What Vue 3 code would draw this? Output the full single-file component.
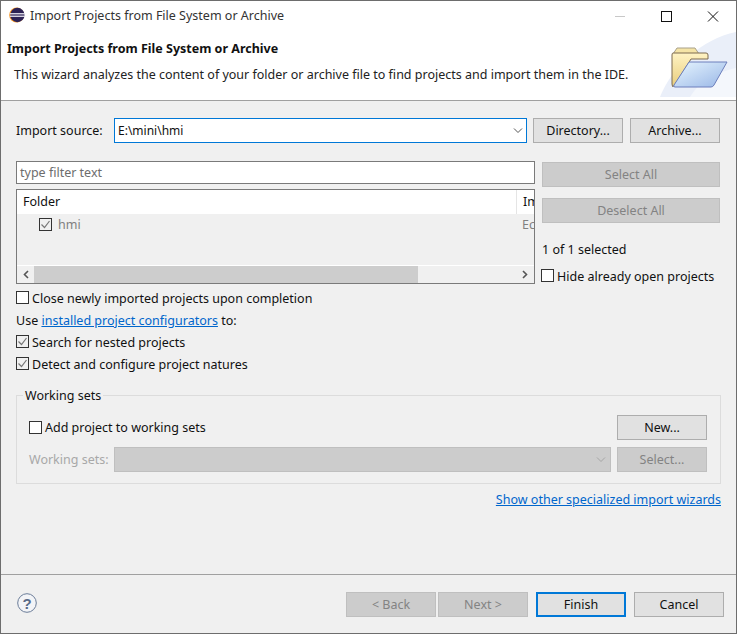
<template>
  <div class="window">
    <!-- title bar -->
    <div class="titlebar">
      <svg class="app-icon" width="16" height="16" viewBox="0 0 16 16">
        <circle cx="7.6" cy="8" r="7.4" fill="#f7941e" />
        <circle cx="8.4" cy="8" r="7.2" fill="#2c2255" />
        <rect x="1" y="6.1" width="15" height="1.3" fill="#e8e6f0" />
        <rect x="1" y="8.6" width="15" height="1.3" fill="#e8e6f0" />
      </svg>
      <span class="title-text">Import Projects from File System or Archive</span>
      <div class="win-controls">
        <svg width="46" height="30" viewBox="0 0 46 30"><rect x="17" y="15" width="10" height="1" fill="#c8c8c8" /></svg>
        <svg width="46" height="30" viewBox="0 0 46 30"><rect x="17.5" y="10.5" width="10" height="10" fill="none" stroke="#111" /></svg>
        <svg width="46" height="30" viewBox="0 0 46 30"><path d="M18 10.5l10 10M28 10.5l-10 10" stroke="#111" fill="none" /></svg>
      </div>
    </div>

    <!-- wizard header -->
    <div class="wiz-header">
      <div class="wiz-text">
        <h1>Import Projects from File System or Archive</h1>
        <p>This wizard analyzes the content of your folder or archive file to find projects and import them in the IDE.</p>
      </div>
      <svg class="wiz-image" width="76" height="70" viewBox="0 0 76 70">
        <defs>
          <linearGradient id="back" x1="0" y1="0" x2="0" y2="1">
            <stop offset="0" stop-color="#fff3c4" />
            <stop offset="1" stop-color="#e8cd7c" />
          </linearGradient>
          <linearGradient id="front" x1="0" y1="0" x2="1" y2="1">
            <stop offset="0" stop-color="#e8f6ff" />
            <stop offset="1" stop-color="#98b6e6" />
          </linearGradient>
        </defs>
        <path d="M0 67C10 40 42 8 76 2V67Z" fill="#eaeff9" />
        <path d="M30 67C40 50 58 42 76 38V67Z" fill="#f4f7fc" />
        <path d="M13 24l4-6h18l4 6z" fill="#f5e4a6" stroke="#a8a08a" />
        <path d="M13 23h33q2 0 2 2v4H31L14 56q-2 2-2-2V25q0-2 1-2z" fill="url(#back)" stroke="#7d6a50" />
        <path d="M29 32h38L54 55q-1 2-3 2H15q-2 0-1-2z" fill="url(#front)" stroke="#6d7fbc" />
      </svg>
    </div>

    <div class="wiz-body">
      <div class="source-row">
        <label class="source-label">Import source:</label>
        <div class="combo focused">
          <span>E:\mini\hmi</span>
          <svg width="10" height="6" viewBox="0 0 10 6"><path d="M1 .5l4 4 4-4" stroke="#555" fill="none" /></svg>
        </div>
        <button class="btn">Directory...</button>
        <button class="btn">Archive...</button>
      </div>

      <div class="projects">
        <div class="projects-left">
          <div class="filter">type filter text</div>
          <div class="tree">
            <div class="tree-head">
              <div class="col-folder">Folder</div>
              <div class="col-import">Im</div>
            </div>
            <div class="tree-body">
              <div class="tree-row">
                <span class="check checked tree-check">
                  <svg width="11" height="11" viewBox="0 0 11 11"><path d="M1.5 5.5l3 3 5-6.5" stroke="#777" stroke-width="1.2" fill="none" /></svg>
                </span>
                <span class="tree-name">hmi</span>
                <span class="tree-status">Ec</span>
              </div>
            </div>
            <div class="hscroll">
              <svg width="17" height="17" viewBox="0 0 17 17"><path d="M11 5l-3.500 3.500 3.500 3.500" stroke="#555" stroke-width="1.600" fill="none" /></svg>
              <div class="hscroll-track"><div class="hscroll-thumb"></div></div>
              <svg width="18" height="17" viewBox="0 0 18 17"><path d="M7 5l3.500 3.500-3.500 3.500" stroke="#555" stroke-width="1.600" fill="none" /></svg>
            </div>
          </div>
        </div>
        <div class="projects-right">
          <button class="btn disabled wide">Select All</button>
          <button class="btn disabled wide">Deselect All</button>
          <div class="sel-count">1 of 1 selected</div>
          <label class="check-row low hide-open"><span class="check"></span>Hide already open projects</label>
        </div>
      </div>

      <div class="options">
        <label class="check-row low"><span class="check"></span>Close newly imported projects upon completion</label>
        <div class="opt-line">Use <a class="link">installed project configurators</a> to:</div>
        <label class="check-row low" v-for="o in checkedOptions" :key="o">
          <span class="check checked">
            <svg width="11" height="11" viewBox="0 0 11 11"><path d="M1.5 5.5l3 3 5-6.5" stroke="#777" stroke-width="1.2" fill="none" /></svg>
          </span>{{ o }}
        </label>
      </div>

      <fieldset class="group">
        <legend>Working sets</legend>
        <div class="group-row first">
          <label class="check-row"><span class="check"></span>Add project to working sets</label>
          <button class="btn">New...</button>
        </div>
        <div class="group-row">
          <span class="ws-label">Working sets:</span>
          <div class="combo disabled-combo">
            <svg width="10" height="6" viewBox="0 0 10 6"><path d="M1 .5l4 4 4-4" stroke="#a5a5a5" fill="none" /></svg>
          </div>
          <button class="btn disabled">Select...</button>
        </div>
      </fieldset>

      <div class="more-link"><a class="link">Show other specialized import wizards</a></div>
    </div>

    <!-- bottom buttons -->
    <div class="wiz-footer">
      <svg class="help" width="20" height="20" viewBox="0 0 20 20">
        <circle cx="10" cy="10" r="9.300" fill="#f3f4f7" stroke="#6a7c98" />
        <text x="10" y="15.500" text-anchor="middle" class="help-mark">?</text>
      </svg>
      <div class="footer-btns">
        <button class="btn disabled">&lt; Back</button>
        <button class="btn disabled next">Next &gt;</button>
        <button class="btn default">Finish</button>
        <button class="btn">Cancel</button>
      </div>
    </div>
  </div>
</template>

<script setup>
const checkedOptions = ['Search for nested projects', 'Detect and configure project natures']
</script>

<style>
html, body { margin: 0; background: #f0f0f0; }
</style>

<style scoped>
.window {
  width: 737px;
  height: 634px;
  box-sizing: border-box;
  border: 1px solid #6d6d6d;
  display: flex;
  flex-direction: column;
  background: #f0f0f0;
  font-family: "Noto Sans", sans-serif;
  font-size: 12.500px;
  color: #111;
  overflow: hidden;
}

.titlebar {
  height: 29px;
  flex: none;
  display: flex;
  align-items: center;
  background: #fff;
  padding-left: 8px;
}
.app-icon { margin-right: 5px; margin-top: -1px; }
.title-text { color: #333; flex: 1; }
.win-controls { display: flex; align-self: flex-start; }

.wiz-header {
  height: 70px;
  flex: none;
  display: flex;
  background: #fff;
  border-bottom: 1px solid #a0a0a0;
  box-sizing: content-box;
}
.wiz-text { flex: 1; padding-left: 6px; }
.wiz-text h1 { font-size: 12.500px; font-weight: 700; margin: 10px 0 0; line-height: 18px; color: #111; }
.wiz-text p { margin: 8px 0 0 7px; line-height: 18px; color: #222; white-space: nowrap; }
.wiz-image { flex: none; align-self: flex-end; }

.wiz-body { flex: 1; padding: 17px 15px 0; display: flex; flex-direction: column; }

.source-row { display: flex; align-items: center; height: 25px; }
.source-label { width: 98px; flex: none; }
.combo {
  box-sizing: border-box;
  height: 25px;
  display: flex;
  align-items: center;
  justify-content: space-between;
  padding: 0 3px 0 3px;
  background: #fff;
  border: 1px solid #7a7a7a;
}
.combo span { font-size: 12px; }
.combo.focused { width: 413px; border-color: #0078d7; margin-right: 6px; }
.disabled-combo { width: 497px; justify-content: flex-end; background: #ccc; border-color: #bfbfbf; margin-right: 6px; padding-right: 4px; }

.btn {
  box-sizing: border-box;
  width: 90px;
  height: 25px;
  padding: 0;
  flex: none;
  background: #e1e1e1;
  border: 1px solid #adadad;
  font: inherit;
  color: #111;
}
.source-row .btn + .btn { margin-left: 7px; }
.btn.disabled { background: #ccc; border-color: #bfbfbf; color: #838383; }
.btn.default { border: 2px solid #0078d7; }
.btn.wide { width: 178px; display: block; }

.projects { display: flex; margin-top: 18px; }
.projects-left { width: 519px; flex: none; }
.projects-right { margin-left: 7px; padding-top: 1px; }
.projects-right .btn + .btn { margin-top: 11px; }

.filter {
  box-sizing: border-box;
  height: 23px;
  line-height: 21px;
  padding-left: 3px;
  background: #fff;
  border: 1px solid #7a7a7a;
  color: #6d6d6d;
}
.tree {
  box-sizing: border-box;
  height: 95px;
  margin-top: 5px;
  border: 1px solid #7a7a7a;
  display: flex;
  flex-direction: column;
  overflow: hidden;
}
.tree-head { height: 24px; flex: none; display: flex; background: #fff; line-height: 23px; }
.col-folder { width: 500px; flex: none; box-sizing: border-box; padding-left: 6px; border-right: 1px solid #e5e5e5; }
.col-import { padding-left: 6px; color: #111; overflow: hidden; }
.tree-body { flex: 1; background: #f0f0f0; }
.tree-row { display: flex; align-items: center; height: 19px; margin-top: 1px; }
.tree-check { margin-left: 22px; margin-right: 6px; }
.tree-name { color: #808080; flex: 1; }
.tree-status { color: #808080; width: 12px; overflow: hidden; flex: none; }

.hscroll { height: 18px; flex: none; display: flex; align-items: center; border-top: 1px solid #fff; box-sizing: border-box; }
.hscroll-track { flex: 1; height: 100%; background: #f0f0f0; }
.hscroll-thumb { width: 384px; height: 100%; background: #cdcdcd; }

.sel-count { margin-top: 18px; line-height: 18px; height: 18px; }
.hide-open { margin-top: 5px; margin-left: -1px; }

.check-row { display: flex; align-items: center; height: 22px; white-space: nowrap; box-sizing: border-box; }
.check-row.low { padding-top: 2px; }
.check-row.low .check { margin-top: -2px; }
.check {
  box-sizing: border-box;
  width: 13px;
  height: 13px;
  flex: none;
  margin-right: 3px;
  background: #fff;
  border: 1px solid #333;
  display: inline-flex;
  align-items: center;
  justify-content: center;
}
.check.checked { background: #f0f0f0; }
.check svg { flex: none; }
.tree-check { margin-right: 6px; }

.options { margin-top: 0; }
.opt-line { height: 22px; line-height: 25px; }
.link { color: #0066cc; text-decoration: underline; }

.group {
  box-sizing: border-box;
  margin: 12px 0 0;
  padding: 0;
  width: 705px;
  height: 98px;
  border: 1px solid #dcdcdc;
}
.group legend { margin-left: 6px; padding: 2px 2px 0; line-height: 16px; color: #111; }
.group-row { display: flex; align-items: center; padding-left: 12px; height: 25px; }
.group-row.first { justify-content: space-between; padding-right: 13px; margin-top: 11px; margin-bottom: 7px; }
.ws-label { width: 85px; flex: none; color: #a8a8a8; }

.more-link { text-align: right; margin-top: 7px; line-height: 18px; }

.wiz-footer {
  height: 59px;
  flex: none;
  box-sizing: border-box;
  border-top: 1px solid #a0a0a0;
  display: flex;
  align-items: flex-start;
  justify-content: space-between;
  padding: 17px 12px 0 16px;
}
.help { margin-top: 1px; }
.help-mark { font-size: 15px; font-weight: 700; fill: #5a6b88; font-family: "Liberation Sans", sans-serif; }
.footer-btns { display: flex; }
.footer-btns .next { margin-left: 2px; }
.footer-btns .default { margin-left: 8px; margin-right: 8px; }
</style>
